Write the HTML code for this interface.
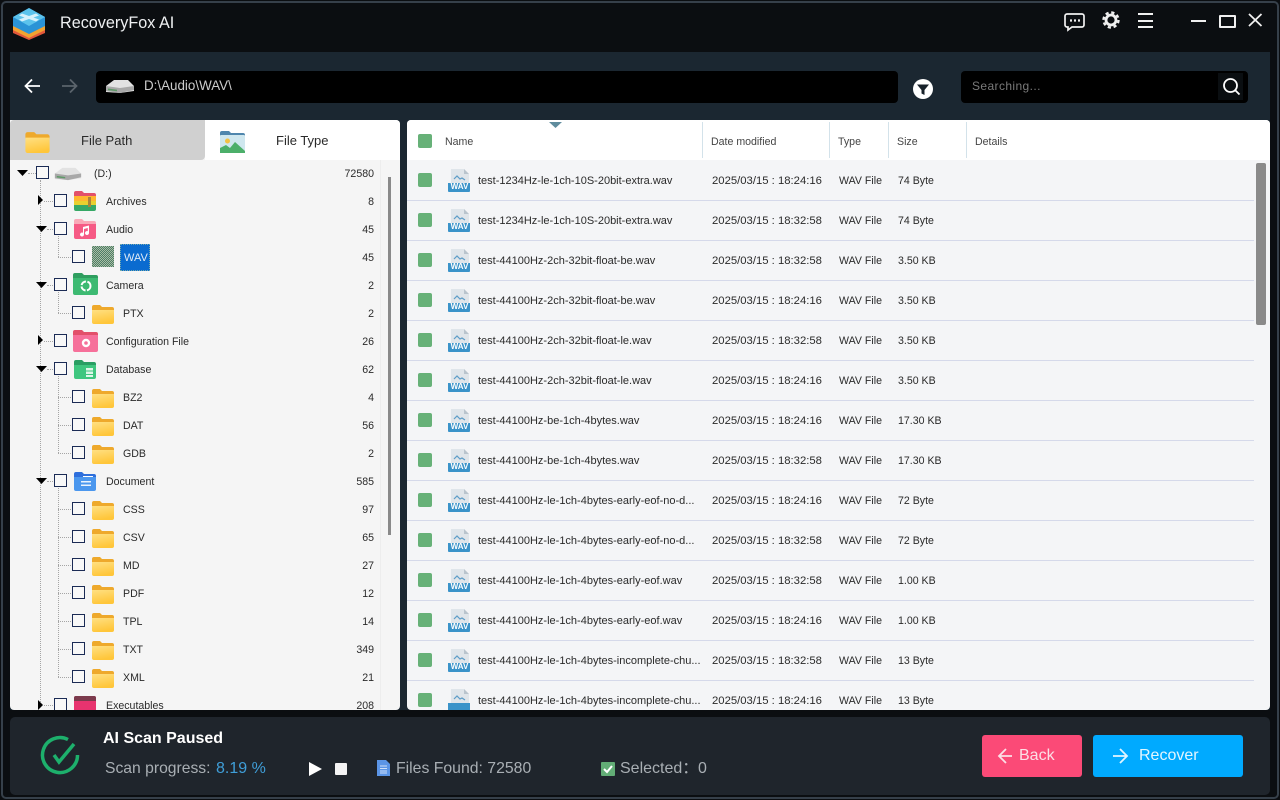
<!DOCTYPE html>
<html><head><meta charset="utf-8"><title>RecoveryFox AI</title>
<style>
html,body{margin:0;padding:0;background:#0b0e11}
body{width:1280px;height:800px;position:relative;overflow:hidden;font-family:"Liberation Sans","Noto Sans CJK SC",sans-serif;color:#222}
div,span,svg{position:absolute}
svg{display:block}
.t{white-space:nowrap;line-height:14px;font-size:10.6px;color:#2a2a2a}
.cb{width:11px;height:11px;border:1px solid #1b2b55;background:#f8f8f8}
.n{right:26px;text-align:right;white-space:nowrap;font-size:10.6px;line-height:14px;color:#2a2a2a}
.g{width:14px;height:14px;left:418px;background:#67b178;border-radius:2px}
.row{left:407px;width:847px;height:1px;background:#d5d9ea}
.f{left:448px;width:23px;height:23px}
.w{left:449px;width:21px;text-align:center;font:bold 8px/8px "Liberation Sans",sans-serif;color:#fff}
.c{white-space:nowrap;font-size:10.6px;line-height:14px;color:#2a2a2a;margin-top:3px}
.c[style*="left:478"],.c[style*="left:71p"]{font-size:11px}
.c[style*="left:712"],.c[style*="left:305"]{font-size:11.3px}
.h{white-space:nowrap;font-size:10.6px;line-height:14px;color:#444;top:135px}
.d{width:1px;top:122px;height:36px;background:#d3e2ea}
.dv{width:0;border-left:1px dotted #a5a5a5}
.dh{height:0;border-top:1px dotted #a5a5a5}
</style></head><body>
<svg width="0" height="0" style="position:absolute">
<defs>
<linearGradient id="yg" x1="0" y1="0" x2="0.3" y2="1"><stop offset="0" stop-color="#ffe083"/><stop offset="1" stop-color="#ffc63a"/></linearGradient>
<symbol id="yf" viewBox="0 0 22 20"><path d="M0 3a2 2 0 0 1 2-2h6l2 2h10a2 2 0 0 1 2 2v2H0z" fill="#eea92c"/><path d="M0 6h22v12a2 2 0 0 1-2 2H2a2 2 0 0 1-2-2z" fill="url(#yg)"/></symbol>
<symbol id="dr" viewBox="0 0 30 16"><path d="M1 8 9 2h14l6 6v5l-14 2-14-1z" fill="#e2e2e2"/><path d="M1 8l14 2 14-2v4l-14 3-14-2z" fill="#a8a8a8"/><path d="M3 10.500l9 1.200v1.500l-9-1z" fill="#5f9a68"/></symbol>
<symbol id="fi" viewBox="0 0 23 23"><path d="M3 0h13l5 5v10H3z" fill="#dfe5ea"/><path d="M16 0v5h5z" fill="#b9c4cd"/><path d="M6 10l3-3 3 3 2-1 3 2" fill="none" stroke="#5c9cc7" stroke-width="1.200"/><path d="M0 14h22v8a1 1 0 0 1-1 1H1a1 1 0 0 1-1-1z" fill="#3a93c9"/></symbol>
</defs></svg>

<!-- main backdrop -->
<div style="left:10px;top:52px;width:1260px;height:658px;background:#1b2731"></div>

<!-- window frame -->
<div style="left:1px;top:1px;width:1274px;height:794px;border:2px solid #36404a;border-radius:5px"></div>

<!-- title -->
<svg style="left:13px;top:8px" width="32" height="32" viewBox="0 0 32 32">
<path d="M0 21v4l16 7 16-7v-4l-16 8z" fill="#e2573a"/>
<path d="M0 16v6l16 8 16-8v-6l-16 8z" fill="#f2a331"/>
<path d="M0 9 16 0l16 9v9l-16 8-16-8z" fill="#2a93d6"/>
<path d="M16 0l16 9-16 9L0 9z" fill="#5cc3ec"/>
<path d="M9 5.500 16 8l7-2.500 3 2-5.500 2 5.500 2-3 2-7-2.500-7 2.500-3-2 5.500-2-5.500-2z" fill="#d6f1fb"/></svg>
<span class="t" style="left:60px;top:13px;font-size:16.200px;line-height:20px;color:#eef0f2">RecoveryFox AI</span>
<svg style="left:1064px;top:12px" width="22" height="20" viewBox="0 0 22 20" fill="none" stroke="#f0f0f0" stroke-width="1.700"><path d="M3 2h15a2 2 0 0 1 2 2v9a2 2 0 0 1-2 2H8l-4 3v-3H3a2 2 0 0 1-2-2V4a2 2 0 0 1 2-2z"/><path d="M6 8.500h2M10 8.500h2M14 8.500h2" stroke-width="2.200"/></svg>
<svg style="left:1102px;top:11px" width="18" height="18" viewBox="0 0 18 18" fill="none" stroke="#f0f0f0"><circle cx="9" cy="9" r="5" stroke-width="2.800"/><circle cx="9" cy="9" r="7.500" stroke-width="2.400" stroke-dasharray="3.200 2.690"/></svg>
<div style="left:1138px;top:13px;width:15px;height:2px;background:#f0f0f0"></div>
<div style="left:1138px;top:20px;width:15px;height:2px;background:#f0f0f0"></div>
<div style="left:1138px;top:26px;width:15px;height:2px;background:#f0f0f0"></div>
<div style="left:1191px;top:20px;width:15px;height:2px;background:#f0f0f0"></div>
<div style="left:1219px;top:15px;width:13px;height:9px;border:2px solid #f0f0f0;border-radius:1px"></div>
<svg style="left:1248px;top:13px" width="15" height="14" viewBox="0 0 15 14"><path d="M1 1l12.500 12M13.500 1 1 13" stroke="#f0f0f0" stroke-width="1.800" fill="none"/></svg>

<!-- toolbar -->
<svg style="left:24px;top:78px" width="17" height="16" viewBox="0 0 17 16"><path d="M16 8H2M8 1.500 1.500 8 8 14.500" fill="none" stroke="#fff" stroke-width="1.800"/></svg>
<svg style="left:61px;top:78px" width="17" height="16" viewBox="0 0 17 16"><path d="M1 8h14M9 1.500 15.500 8 9 14.500" fill="none" stroke="#5b646c" stroke-width="1.800"/></svg>
<div style="left:96px;top:71px;width:802px;height:32px;background:#000;border-radius:4px"></div>
<svg style="left:105px;top:78px" width="30" height="16"><use href="#dr"/></svg>
<span class="t" style="left:144px;top:78px;font-size:13.400px;line-height:16px;color:#ccc">D:\Audio\WAV\</span>
<svg style="left:913px;top:79px" width="20" height="20" viewBox="0 0 20 20"><circle cx="10" cy="10" r="10" fill="#fff"/><path d="M4 5.500h12l-4.500 5.500v5l-3-1.500V11z" fill="#17212a"/></svg>
<div style="left:961px;top:71px;width:287px;height:32px;background:#000;border-radius:4px"></div>
<div style="left:1218px;top:73px;width:25px;height:27px;background:#0a0e11"></div>
<span class="t" style="left:972px;top:78px;font-size:12px;line-height:16px;letter-spacing:.4px;color:#7a7a7a">Searching...</span>
<svg style="left:1222px;top:77px" width="19" height="19" viewBox="0 0 19 19" fill="none" stroke="#fff" stroke-width="1.800"><circle cx="8.500" cy="8.500" r="6.500"/><path d="M13 13l4.500 4.500"/></svg>

<!-- left panel -->
<div style="left:10px;top:120px;width:390px;height:590px;background:#f5f5f5;border-radius:0 4px 4px 4px;overflow:hidden">
 <div style="left:195px;top:0;width:195px;height:40px;background:#fff"></div>
 <div style="left:0;top:0;width:195px;height:40px;background:#d0d0d0;border-radius:4px 0 4px 0"></div>
</div>
<svg style="left:25px;top:131px" width="25" height="22"><use href="#yf"/></svg>
<span class="t" style="left:81px;top:132px;font-size:13px;line-height:17px">File Path</span>
<svg style="left:220px;top:131px" width="25" height="22" viewBox="0 0 25 22"><path d="M0 2a2 2 0 0 1 2-2h7l2 2h12a2 2 0 0 1 2 2v2H0z" fill="#4f86ad"/><rect y="4" width="25" height="18" rx="1" fill="#cfe7ef"/><circle cx="7.500" cy="10" r="2.500" fill="#f3c144"/><path d="M0 22v-5l6-3 4 3 5-6 10 9v2z" fill="#4caf6a"/></svg>
<span class="t" style="left:276px;top:132px;font-size:13px;line-height:17px">File Type</span>

<!-- tree -->
<div style="left:0;top:160px;width:400px;height:550px;overflow:hidden">
 <div class="dv" style="left:40px;top:20px;height:526px"></div>
 <div class="dv" style="left:58px;top:76px;height:21px"></div>
 <div class="dv" style="left:58px;top:132px;height:21px"></div>
 <div class="dv" style="left:58px;top:216px;height:77px"></div>
 <div class="dv" style="left:58px;top:328px;height:189px"></div>

 <div class="dh" style="left:28px;top:13px;width:8px"></div>
 <svg style="left:17px;top:10px" width="11" height="6"><path d="M0 0h11L5.500 6z" fill="#000"/></svg>
 <div class="cb" style="left:36px;top:6px"></div>
 <svg style="left:53px;top:6px" width="30" height="15"><use href="#dr"/></svg>
 <span class="t" style="left:94px;top:7px">(D:)</span><span class="n" style="top:7px">72580</span>

 <svg style="left:38px;top:35px" width="5" height="10"><path d="M0 0l5 5-5 5z" fill="#000"/></svg>
 <div class="dh" style="left:44px;top:41px;width:9px"></div>
 <div class="cb" style="left:54px;top:34px"></div>
 <svg style="left:74px;top:31px" width="22" height="20" viewBox="0 0 22 20"><path d="M0 2a2 2 0 0 1 2-2h6l2 2h10a2 2 0 0 1 2 2v3H0z" fill="#e2506a"/><rect y="5" width="22" height="5" fill="#ffb62e"/><rect y="10" width="22" height="5" fill="#e8d02f"/><path d="M0 14h22v4a2 2 0 0 1-2 2H2a2 2 0 0 1-2-2z" fill="#36a866"/><rect x="14" y="6" width="3" height="10" fill="#a8843a"/></svg>
 <span class="t" style="left:106px;top:35px">Archives</span><span class="n" style="top:35px">8</span>

 <svg style="left:36px;top:66px" width="11" height="6"><path d="M0 0h11L5.500 6z" fill="#000"/></svg>
 <div class="dh" style="left:47px;top:69px;width:6px"></div>
 <div class="cb" style="left:54px;top:62px"></div>
 <svg style="left:74px;top:59px" width="22" height="20" viewBox="0 0 22 20"><path d="M0 2a2 2 0 0 1 2-2h6l2 2h10a2 2 0 0 1 2 2v2H0z" fill="#f9a9b8"/><path d="M0 5h22v13a2 2 0 0 1-2 2H2a2 2 0 0 1-2-2z" fill="#f65a85"/><path d="M9 8l6-1.500V14a2 2 0 1 1-1.200-1.800V9L10 10v5.500a2 2 0 1 1-1-1.700z" fill="#fff"/></svg>
 <span class="t" style="left:106px;top:63px">Audio</span><span class="n" style="top:63px">45</span>

 <div class="dh" style="left:58px;top:97px;width:13px"></div>
 <div class="cb" style="left:72px;top:90px"></div>
 <div style="left:92px;top:86px;width:22px;height:21px;background:repeating-conic-gradient(#4d7d68 0 25%,#a9bda3 0 50%) 0 0/2px 2px"></div>
 <div style="left:120px;top:84px;width:30px;height:27px;background:#0a6bd0;border:1px dotted #7aa;box-sizing:border-box"><span class="t" style="left:3px;top:6px;font-size:11px;color:#dfeaf6">WAV</span></div>
 <span class="n" style="top:91px">45</span>

 <svg style="left:36px;top:122px" width="11" height="6"><path d="M0 0h11L5.500 6z" fill="#000"/></svg>
 <div class="dh" style="left:47px;top:125px;width:6px"></div>
 <div class="cb" style="left:54px;top:118px"></div>
 <svg style="left:73px;top:113px" width="25" height="22" viewBox="0 0 25 22"><path d="M0 2a2 2 0 0 1 2-2h7l2 2h12a2 2 0 0 1 2 2v2H0z" fill="#2f9e5f"/><path d="M0 5h25v15a2 2 0 0 1-2 2H2a2 2 0 0 1-2-2z" fill="#3dba72"/><circle cx="13" cy="13" r="4.500" fill="none" stroke="#fff" stroke-width="2" stroke-dasharray="6 1.500"/></svg>
 <span class="t" style="left:106px;top:119px">Camera</span><span class="n" style="top:119px">2</span>

 <div class="dh" style="left:58px;top:153px;width:13px"></div>
 <div class="cb" style="left:72px;top:146px"></div>
 <svg style="left:92px;top:144px" width="22" height="20"><use href="#yf"/></svg>
 <span class="t" style="left:123px;top:147px">PTX</span><span class="n" style="top:147px">2</span>

 <svg style="left:38px;top:175px" width="5" height="10"><path d="M0 0l5 5-5 5z" fill="#000"/></svg>
 <div class="dh" style="left:44px;top:181px;width:9px"></div>
 <div class="cb" style="left:54px;top:174px"></div>
 <svg style="left:73px;top:170px" width="25" height="22" viewBox="0 0 25 22"><path d="M0 2a2 2 0 0 1 2-2h7l2 2h12a2 2 0 0 1 2 2v2H0z" fill="#e2506a"/><path d="M0 5h25v15a2 2 0 0 1-2 2H2a2 2 0 0 1-2-2z" fill="#f6709a"/><circle cx="13" cy="13" r="3" fill="none" stroke="#fff" stroke-width="2.400"/></svg>
 <span class="t" style="left:106px;top:175px">Configuration File</span><span class="n" style="top:175px">26</span>

 <svg style="left:36px;top:206px" width="11" height="6"><path d="M0 0h11L5.500 6z" fill="#000"/></svg>
 <div class="dh" style="left:47px;top:209px;width:6px"></div>
 <div class="cb" style="left:54px;top:202px"></div>
 <svg style="left:74px;top:200px" width="22" height="19" viewBox="0 0 22 19"><path d="M0 2a2 2 0 0 1 2-2h6l2 2h10a2 2 0 0 1 2 2v2H0z" fill="#2a9e63"/><path d="M0 5h22v12a2 2 0 0 1-2 2H2a2 2 0 0 1-2-2z" fill="#3fc67f"/><path d="M12 8h7v2.500h-7zM12 11.500h7V14h-7zM12 15h7v2h-7z" fill="#dff6e8"/></svg>
 <span class="t" style="left:106px;top:203px">Database</span><span class="n" style="top:203px">62</span>

 <div class="dh" style="left:58px;top:237px;width:13px"></div><div class="cb" style="left:72px;top:230px"></div>
 <svg style="left:92px;top:228px" width="22" height="20"><use href="#yf"/></svg>
 <span class="t" style="left:123px;top:231px">BZ2</span><span class="n" style="top:231px">4</span>

 <div class="dh" style="left:58px;top:265px;width:13px"></div><div class="cb" style="left:72px;top:258px"></div>
 <svg style="left:92px;top:256px" width="22" height="20"><use href="#yf"/></svg>
 <span class="t" style="left:123px;top:259px">DAT</span><span class="n" style="top:259px">56</span>

 <div class="dh" style="left:58px;top:293px;width:13px"></div><div class="cb" style="left:72px;top:286px"></div>
 <svg style="left:92px;top:284px" width="22" height="20"><use href="#yf"/></svg>
 <span class="t" style="left:123px;top:287px">GDB</span><span class="n" style="top:287px">2</span>

 <svg style="left:36px;top:318px" width="11" height="6"><path d="M0 0h11L5.500 6z" fill="#000"/></svg>
 <div class="dh" style="left:47px;top:321px;width:6px"></div>
 <div class="cb" style="left:54px;top:314px"></div>
 <svg style="left:74px;top:312px" width="22" height="19" viewBox="0 0 22 19"><path d="M0 2a2 2 0 0 1 2-2h6l2 2h10a2 2 0 0 1 2 2v2H0z" fill="#2e6fdc"/><path d="M0 5h22v12a2 2 0 0 1-2 2H2a2 2 0 0 1-2-2z" fill="#4b97ee"/><path d="M9 4h10v1H9z" fill="#fff"/><path d="M7 9h10v1.500H7zM7 12.500h10V14H7z" fill="#eaf3fd"/></svg>
 <span class="t" style="left:106px;top:315px">Document</span><span class="n" style="top:315px">585</span>

 <div class="dh" style="left:58px;top:349px;width:13px"></div><div class="cb" style="left:72px;top:342px"></div>
 <svg style="left:92px;top:340px" width="22" height="20"><use href="#yf"/></svg>
 <span class="t" style="left:123px;top:343px">CSS</span><span class="n" style="top:343px">97</span>

 <div class="dh" style="left:58px;top:377px;width:13px"></div><div class="cb" style="left:72px;top:370px"></div>
 <svg style="left:92px;top:368px" width="22" height="20"><use href="#yf"/></svg>
 <span class="t" style="left:123px;top:371px">CSV</span><span class="n" style="top:371px">65</span>

 <div class="dh" style="left:58px;top:405px;width:13px"></div><div class="cb" style="left:72px;top:398px"></div>
 <svg style="left:92px;top:396px" width="22" height="20"><use href="#yf"/></svg>
 <span class="t" style="left:123px;top:399px">MD</span><span class="n" style="top:399px">27</span>

 <div class="dh" style="left:58px;top:433px;width:13px"></div><div class="cb" style="left:72px;top:426px"></div>
 <svg style="left:92px;top:424px" width="22" height="20"><use href="#yf"/></svg>
 <span class="t" style="left:123px;top:427px">PDF</span><span class="n" style="top:427px">12</span>

 <div class="dh" style="left:58px;top:461px;width:13px"></div><div class="cb" style="left:72px;top:454px"></div>
 <svg style="left:92px;top:452px" width="22" height="20"><use href="#yf"/></svg>
 <span class="t" style="left:123px;top:455px">TPL</span><span class="n" style="top:455px">14</span>

 <div class="dh" style="left:58px;top:489px;width:13px"></div><div class="cb" style="left:72px;top:482px"></div>
 <svg style="left:92px;top:480px" width="22" height="20"><use href="#yf"/></svg>
 <span class="t" style="left:123px;top:483px">TXT</span><span class="n" style="top:483px">349</span>

 <div class="dh" style="left:58px;top:517px;width:13px"></div><div class="cb" style="left:72px;top:510px"></div>
 <svg style="left:92px;top:508px" width="22" height="20"><use href="#yf"/></svg>
 <span class="t" style="left:123px;top:511px">XML</span><span class="n" style="top:511px">21</span>

 <svg style="left:38px;top:540px" width="5" height="10"><path d="M0 0l5 5-5 5z" fill="#000"/></svg>
 <div class="dh" style="left:44px;top:545px;width:9px"></div>
 <div class="cb" style="left:54px;top:538px"></div>
 <div style="left:74px;top:536px;width:22px;height:20px;background:#e8336f;border-radius:2px"></div>
 <div style="left:74px;top:536px;width:22px;height:5px;background:#7b3a4c;border-radius:2px 2px 0 0"></div>
 <span class="t" style="left:106px;top:539px">Executables</span><span class="n" style="top:539px">208</span>

 <div style="left:380px;top:0;width:1px;height:550px;background:#ededed"></div>
 <div style="left:388px;top:17px;width:3px;height:358px;background:#8a8a8a"></div>
</div>

<!-- right panel -->
<div style="left:407px;top:120px;width:863px;height:590px;background:#f4f5f7;border-radius:4px;overflow:hidden">
 <div style="left:0;top:0;width:863px;height:40px;background:#fff"></div>
</div>
<svg style="left:549px;top:122px" width="13" height="6"><path d="M0 0h13L6.500 6z" fill="#5f8c9d"/></svg>
<div class="g" style="top:134px"></div>
<span class="h" style="left:445px">Name</span>
<div class="d" style="left:702px"></div><span class="h" style="left:711px">Date modified</span>
<div class="d" style="left:829px"></div><span class="h" style="left:838px">Type</span>
<div class="d" style="left:888px"></div><span class="h" style="left:897px">Size</span>
<div class="d" style="left:966px"></div><span class="h" style="left:975px">Details</span>
<div style="left:1256px;top:163px;width:10px;height:162px;background:#8a8a8a;border-radius:2px"></div>

<div class="row" style="top:200px"></div><div class="row" style="top:240px"></div><div class="row" style="top:280px"></div><div class="row" style="top:320px"></div><div class="row" style="top:360px"></div><div class="row" style="top:400px"></div><div class="row" style="top:440px"></div><div class="row" style="top:480px"></div><div class="row" style="top:520px"></div><div class="row" style="top:560px"></div><div class="row" style="top:600px"></div><div class="row" style="top:640px"></div><div class="row" style="top:680px"></div>

<div class="g" style="top:173px"></div><svg class="f" style="top:169px"><use href="#fi"/></svg><span class="w" style="top:183px">WAV</span><span class="c" style="left:478px;top:171px">test-1234Hz-le-1ch-10S-20bit-extra.wav</span><span class="c" style="left:712px;top:171px">2025/03/15 : 18:24:16</span><span class="c" style="left:839px;top:171px">WAV File</span><span class="c" style="left:898px;top:171px">74 Byte</span>
<div class="g" style="top:213px"></div><svg class="f" style="top:209px"><use href="#fi"/></svg><span class="w" style="top:223px">WAV</span><span class="c" style="left:478px;top:211px">test-1234Hz-le-1ch-10S-20bit-extra.wav</span><span class="c" style="left:712px;top:211px">2025/03/15 : 18:32:58</span><span class="c" style="left:839px;top:211px">WAV File</span><span class="c" style="left:898px;top:211px">74 Byte</span>
<div class="g" style="top:253px"></div><svg class="f" style="top:249px"><use href="#fi"/></svg><span class="w" style="top:263px">WAV</span><span class="c" style="left:478px;top:251px">test-44100Hz-2ch-32bit-float-be.wav</span><span class="c" style="left:712px;top:251px">2025/03/15 : 18:32:58</span><span class="c" style="left:839px;top:251px">WAV File</span><span class="c" style="left:898px;top:251px">3.50 KB</span>
<div class="g" style="top:293px"></div><svg class="f" style="top:289px"><use href="#fi"/></svg><span class="w" style="top:303px">WAV</span><span class="c" style="left:478px;top:291px">test-44100Hz-2ch-32bit-float-be.wav</span><span class="c" style="left:712px;top:291px">2025/03/15 : 18:24:16</span><span class="c" style="left:839px;top:291px">WAV File</span><span class="c" style="left:898px;top:291px">3.50 KB</span>
<div class="g" style="top:333px"></div><svg class="f" style="top:329px"><use href="#fi"/></svg><span class="w" style="top:343px">WAV</span><span class="c" style="left:478px;top:331px">test-44100Hz-2ch-32bit-float-le.wav</span><span class="c" style="left:712px;top:331px">2025/03/15 : 18:32:58</span><span class="c" style="left:839px;top:331px">WAV File</span><span class="c" style="left:898px;top:331px">3.50 KB</span>
<div class="g" style="top:373px"></div><svg class="f" style="top:369px"><use href="#fi"/></svg><span class="w" style="top:383px">WAV</span><span class="c" style="left:478px;top:371px">test-44100Hz-2ch-32bit-float-le.wav</span><span class="c" style="left:712px;top:371px">2025/03/15 : 18:24:16</span><span class="c" style="left:839px;top:371px">WAV File</span><span class="c" style="left:898px;top:371px">3.50 KB</span>
<div class="g" style="top:413px"></div><svg class="f" style="top:409px"><use href="#fi"/></svg><span class="w" style="top:423px">WAV</span><span class="c" style="left:478px;top:411px">test-44100Hz-be-1ch-4bytes.wav</span><span class="c" style="left:712px;top:411px">2025/03/15 : 18:24:16</span><span class="c" style="left:839px;top:411px">WAV File</span><span class="c" style="left:898px;top:411px">17.30 KB</span>
<div class="g" style="top:453px"></div><svg class="f" style="top:449px"><use href="#fi"/></svg><span class="w" style="top:463px">WAV</span><span class="c" style="left:478px;top:451px">test-44100Hz-be-1ch-4bytes.wav</span><span class="c" style="left:712px;top:451px">2025/03/15 : 18:32:58</span><span class="c" style="left:839px;top:451px">WAV File</span><span class="c" style="left:898px;top:451px">17.30 KB</span>
<div class="g" style="top:493px"></div><svg class="f" style="top:489px"><use href="#fi"/></svg><span class="w" style="top:503px">WAV</span><span class="c" style="left:478px;top:491px">test-44100Hz-le-1ch-4bytes-early-eof-no-d...</span><span class="c" style="left:712px;top:491px">2025/03/15 : 18:24:16</span><span class="c" style="left:839px;top:491px">WAV File</span><span class="c" style="left:898px;top:491px">72 Byte</span>
<div class="g" style="top:533px"></div><svg class="f" style="top:529px"><use href="#fi"/></svg><span class="w" style="top:543px">WAV</span><span class="c" style="left:478px;top:531px">test-44100Hz-le-1ch-4bytes-early-eof-no-d...</span><span class="c" style="left:712px;top:531px">2025/03/15 : 18:32:58</span><span class="c" style="left:839px;top:531px">WAV File</span><span class="c" style="left:898px;top:531px">72 Byte</span>
<div class="g" style="top:573px"></div><svg class="f" style="top:569px"><use href="#fi"/></svg><span class="w" style="top:583px">WAV</span><span class="c" style="left:478px;top:571px">test-44100Hz-le-1ch-4bytes-early-eof.wav</span><span class="c" style="left:712px;top:571px">2025/03/15 : 18:32:58</span><span class="c" style="left:839px;top:571px">WAV File</span><span class="c" style="left:898px;top:571px">1.00 KB</span>
<div class="g" style="top:613px"></div><svg class="f" style="top:609px"><use href="#fi"/></svg><span class="w" style="top:623px">WAV</span><span class="c" style="left:478px;top:611px">test-44100Hz-le-1ch-4bytes-early-eof.wav</span><span class="c" style="left:712px;top:611px">2025/03/15 : 18:24:16</span><span class="c" style="left:839px;top:611px">WAV File</span><span class="c" style="left:898px;top:611px">1.00 KB</span>
<div class="g" style="top:653px"></div><svg class="f" style="top:649px"><use href="#fi"/></svg><span class="w" style="top:663px">WAV</span><span class="c" style="left:478px;top:651px">test-44100Hz-le-1ch-4bytes-incomplete-chu...</span><span class="c" style="left:712px;top:651px">2025/03/15 : 18:32:58</span><span class="c" style="left:839px;top:651px">WAV File</span><span class="c" style="left:898px;top:651px">13 Byte</span>
<div style="left:407px;top:689px;width:860px;height:21px;overflow:hidden">
 <div class="g" style="left:11px;top:4px"></div><svg class="f" style="left:41px;top:0"><use href="#fi"/></svg><span class="c" style="left:71px;top:2px">test-44100Hz-le-1ch-4bytes-incomplete-chu...</span><span class="c" style="left:305px;top:2px">2025/03/15 : 18:24:16</span><span class="c" style="left:432px;top:2px">WAV File</span><span class="c" style="left:491px;top:2px">13 Byte</span>
</div>

<!-- bottom -->
<div style="left:10px;top:717px;width:1260px;height:78px;background:#1f252c;border-radius:5px"></div>
<svg style="left:40px;top:735px" width="40" height="40" viewBox="0 0 40 40" fill="none" stroke="#1db06c" stroke-width="3.500"><path d="M37.500 20A17.500 17.500 0 1 1 28 4.500"/><path d="M14 20l5 7L34 9"/></svg>
<span class="t" style="left:103px;top:729px;font-size:16px;line-height:19px;font-weight:bold;color:#fff">AI Scan Paused</span>
<span class="t" style="left:105px;top:759px;font-size:15.700px;line-height:19px;color:#a9afb4">Scan progress:</span>
<span class="t" style="left:216px;top:759px;font-size:16px;line-height:19px;color:#3f9ed8">8.19 %</span>
<svg style="left:309px;top:762px" width="13" height="14"><path d="M0 0l13 7-13 7z" fill="#fff"/></svg>
<div style="left:335px;top:763px;width:12px;height:12px;background:#f4f4f4;border-radius:1px"></div>
<svg style="left:377px;top:760px" width="13" height="16" viewBox="0 0 13 16"><path d="M0 0h9l4 4v12H0z" fill="#5b95e6"/><path d="M3 6h7M3 8.500h7M3 11h7M3 13h7" stroke="#cfe0f8"/></svg>
<span class="t" style="left:396px;top:759px;font-size:15.800px;line-height:19px;color:#a9afb4">Files Found: 72580</span>
<svg style="left:601px;top:762px" width="14" height="14" viewBox="0 0 14 14"><rect width="14" height="14" rx="1" fill="#62ad76"/><path d="M3 7l3 3 5-6" fill="none" stroke="#fff" stroke-width="2"/></svg>
<span class="t" lang="zh-CN" style="left:620px;top:759px;font-size:16px;line-height:19px;color:#a9afb4">Selected：</span>
<span class="t" style="left:698px;top:759px;font-size:16px;line-height:19px;color:#a9afb4">0</span>

<div style="left:982px;top:735px;width:100px;height:42px;background:#fb4a77;border-radius:3px"></div>
<svg style="left:997px;top:747px" width="16" height="18" viewBox="0 0 16 18"><path d="M15 9H2M9 2 2 9l7 7" fill="none" stroke="#fbdfe6" stroke-width="1.800"/></svg>
<span class="t" style="left:1019px;top:746px;font-size:16px;line-height:20px;color:#fbdfe6">Back</span>
<div style="left:1093px;top:735px;width:150px;height:42px;background:#00aaff;border-radius:3px"></div>
<svg style="left:1112px;top:747px" width="17" height="18" viewBox="0 0 17 18"><path d="M1 9h14M8 2l7 7-7 7" fill="none" stroke="#e2f5ff" stroke-width="1.800"/></svg>
<span class="t" style="left:1139px;top:746px;font-size:16px;line-height:20px;color:#e2f5ff">Recover</span>
</body></html>
